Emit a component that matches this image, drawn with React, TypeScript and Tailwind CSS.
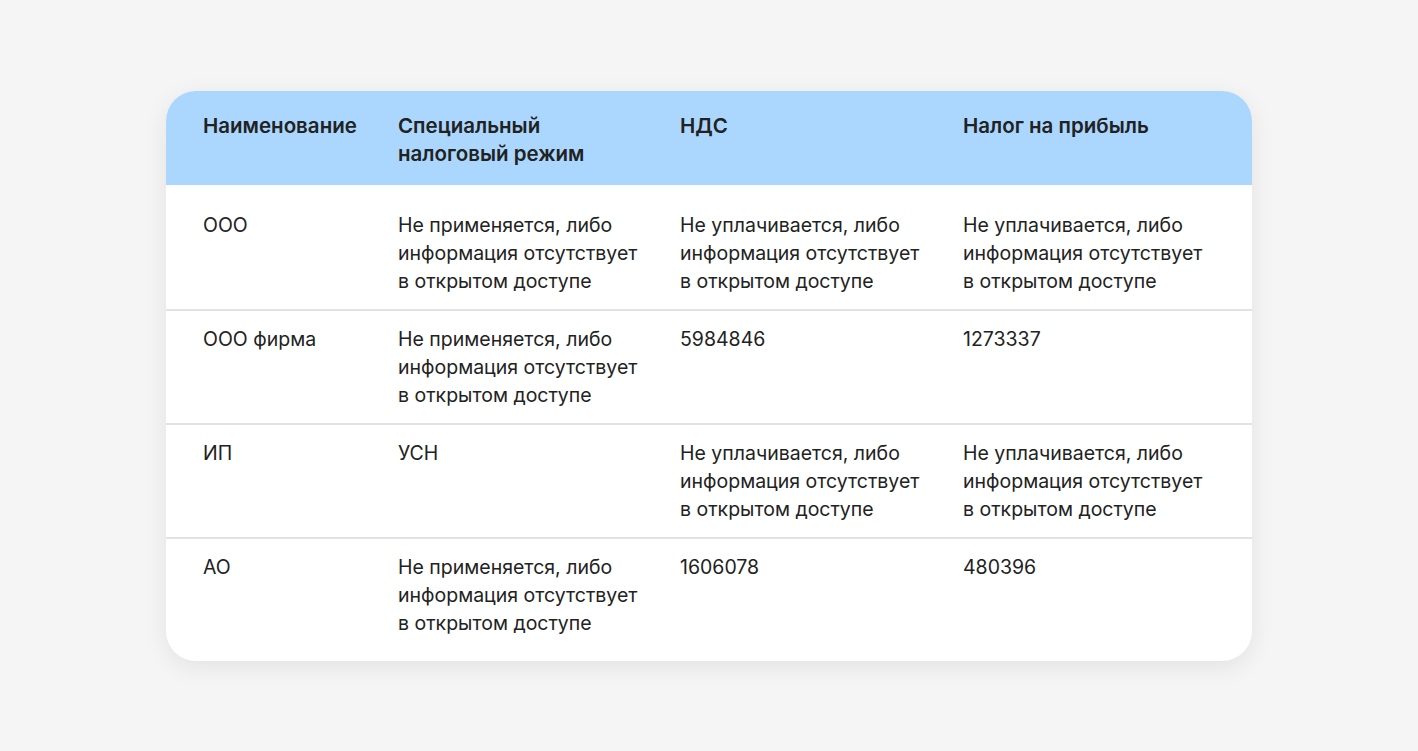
const rows = [
  {
    name: "ООО",
    regime: "Не применяется, либо информация отсутствует в открытом доступе",
    vat: "Не уплачивается, либо информация отсутствует в открытом доступе",
    profit: "Не уплачивается, либо информация отсутствует в открытом доступе",
  },
  {
    name: "ООО фирма",
    regime: "Не применяется, либо информация отсутствует в открытом доступе",
    vat: "5984846",
    profit: "1273337",
  },
  {
    name: "ИП",
    regime: "УСН",
    vat: "Не уплачивается, либо информация отсутствует в открытом доступе",
    profit: "Не уплачивается, либо информация отсутствует в открытом доступе",
  },
  {
    name: "АО",
    regime: "Не применяется, либо информация отсутствует в открытом доступе",
    vat: "1606078",
    profit: "480396",
  },
];

const grid = "grid grid-cols-[195px_282px_283px_1fr] pl-[37px]";

export default function App() {
  return (
    <div
      className="flex h-[751px] items-center justify-center bg-[#f5f5f5] text-[#222222]"
      style={{ fontFamily: "Inter, 'Noto Sans', sans-serif" }}
    >
      <div className="w-[1086px] overflow-hidden rounded-[30px] bg-white shadow-[0_6px_24px_rgba(0,0,0,0.08)]">
        <div className={`${grid} h-[94px] bg-[#abd7fe] pt-[21px] text-[20.5px] font-semibold leading-[28px]`}>
          <div>Наименование</div>
          <div className="max-w-[210px]">Специальный налоговый режим</div>
          <div>НДС</div>
          <div>Налог на прибыль</div>
        </div>
        {rows.map((r, i) => (
          <div
            key={r.name}
            className={`${grid} text-[19.5px] leading-[28px] ${i > 0 ? "border-t-2 border-[#e2e2e2]" : ""} ${i === 0 ? "pt-[26px] pb-[14px]" : i === rows.length - 1 ? "pt-[14px] pb-[24px]" : "py-[14px]"}`}
          >
            <div>{r.name}</div>
            <div className="pr-[28px]">{r.regime}</div>
            <div className="pr-[28px]">{r.vat}</div>
            <div className="pr-[34px]">{r.profit}</div>
          </div>
        ))}
      </div>
    </div>
  );
}
